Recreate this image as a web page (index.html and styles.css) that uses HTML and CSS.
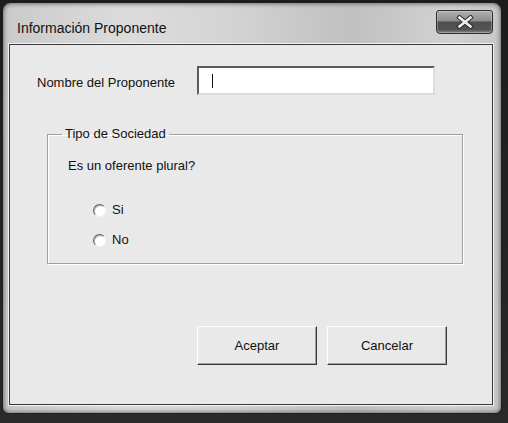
FILE: index.html
```html
<!DOCTYPE html>
<html lang="es">
<head>
<meta charset="utf-8">
<title>Información Proponente</title>
<link rel="stylesheet" href="styles.css">
</head>
<body>
<div class="window">
  <div class="titlebar">
    <span class="title">Información Proponente</span>
    <div class="close">
      <svg width="18" height="14" viewBox="0 0 18 14">
        <path d="M3.5 2.5 L14.5 11.5 M14.5 2.5 L3.5 11.5" stroke="#2a2a2a" stroke-width="4.5" stroke-linecap="square" fill="none"/>
        <path d="M3.5 2.5 L14.5 11.5 M14.5 2.5 L3.5 11.5" stroke="#f0f0f0" stroke-width="2.6" stroke-linecap="square" fill="none"/>
      </svg>
    </div>
  </div>
  <div class="client">
    <div class="row">
      <label class="label">Nombre del Proponente</label>
      <div class="input"><span class="caret"></span></div>
    </div>
    <fieldset class="group">
      <legend class="legend">Tipo de Sociedad</legend>
      <p class="question">Es un oferente plural?</p>
      <div class="radio first"><span class="dot"></span><span>Si</span></div>
      <div class="radio"><span class="dot"></span><span>No</span></div>
    </fieldset>
    <div class="buttons">
      <div class="btn">Aceptar</div>
      <div class="btn">Cancelar</div>
    </div>
  </div>
</div>
</body>
</html>
```
FILE: styles.css
```css
html, body {
  margin: 0;
  padding: 0;
}
body {
  width: 508px;
  height: 423px;
  background: linear-gradient(to bottom, #1c1c1c, #2a2a2a);
  font-family: "Liberation Sans", Arial, sans-serif;
  font-size: 13px;
  color: #111;
  overflow: hidden;
}
.window {
  margin: 2px 0 0 2px;
  width: 500px;
  height: 412px;
  box-sizing: border-box;
  border: 1px solid #1e1e1e;
  border-radius: 9px 9px 7px 7px;
  background: linear-gradient(to right, #cacaca, #dcdcdc 25%, #d4d4d4 45%, #c0c0c0 70%, #d2d2d2 90%, #c6c6c6);
  box-shadow: inset 0 0 4px 1px #707070;
  display: flex;
  flex-direction: column;
}
.titlebar {
  height: 41px;
  display: flex;
  align-items: flex-start;
  justify-content: space-between;
  flex-shrink: 0;
}
.title {
  margin: 17px 0 0 14px;
  font-size: 14px;
  line-height: 16px;
  color: #111;
}
.close {
  margin: 7px 8px 0 0;
  width: 57px;
  height: 24px;
  box-sizing: border-box;
  border: 1px solid #2e2e2e;
  border-radius: 3px 3px 4px 4px;
  background: linear-gradient(to bottom, #b0b0b0, #8e8e8e 45%, #4e4e4e 50%, #555 85%, #8a8a8a);
  box-shadow: inset 0 0 0 1px rgba(255,255,255,0.25);
  display: flex;
  align-items: center;
  justify-content: center;
}
.client {
  margin: 0 8px 8px 6px;
  flex: 1;
  box-sizing: border-box;
  border: 1px solid #3a3a3a;
  background: #e9e9e9;
  box-shadow: 0 0 0 1px #f2f2f2;
  display: flex;
  flex-direction: column;
}
.row {
  margin-top: 21px;
  display: flex;
  align-items: center;
}
.label {
  width: 160px;
  padding-left: 27px;
  box-sizing: content-box;
  line-height: 16px;
  margin-top: 4px;
}
.input {
  width: 238px;
  height: 29px;
  box-sizing: border-box;
  background: #fff;
  border: 2px solid;
  border-color: #5c5c5c #dcdcdc #dcdcdc #5c5c5c;
  display: flex;
  align-items: center;
}
.caret {
  margin-left: 13px;
  width: 1px;
  height: 14px;
  background: #111;
}
.group {
  margin: 31px 0 0 37px;
  width: 416px;
  height: 138px;
  box-sizing: border-box;
  padding: 0 0 0 14px;
  border: 1px solid #a0a0a0;
  box-shadow: 1px 1px 0 #fff, inset 1px 1px 0 #fff;
}
.legend {
  padding: 0 3px;
  line-height: 16px;
}
.question {
  margin: 16px 0 0 6px;
  line-height: 16px;
}
.radio {
  margin-left: 31px;
  display: flex;
  align-items: center;
  gap: 6px;
  line-height: 16px;
  margin-top: 14px;
}
.radio.first {
  margin-top: 28px;
}
.dot {
  width: 13px;
  height: 13px;
  box-sizing: border-box;
  border-radius: 50%;
  background: #fff;
  border: 1px solid;
  border-color: #606060 #f4f4f4 #f4f4f4 #606060;
  box-shadow: inset 1px 1px 0 #b0b0b0;
}
.buttons {
  margin: 62px 0 0 187px;
  display: flex;
  gap: 10px;
}
.btn {
  width: 120px;
  height: 39px;
  box-sizing: border-box;
  border: 1px solid;
  border-color: #fdfdfd #3a3a3a #3a3a3a #fdfdfd;
  box-shadow: inset -1px -1px 0 #a0a0a0;
  background: #e9e9e9;
  display: flex;
  align-items: center;
  justify-content: center;
  line-height: 16px;
}
```
